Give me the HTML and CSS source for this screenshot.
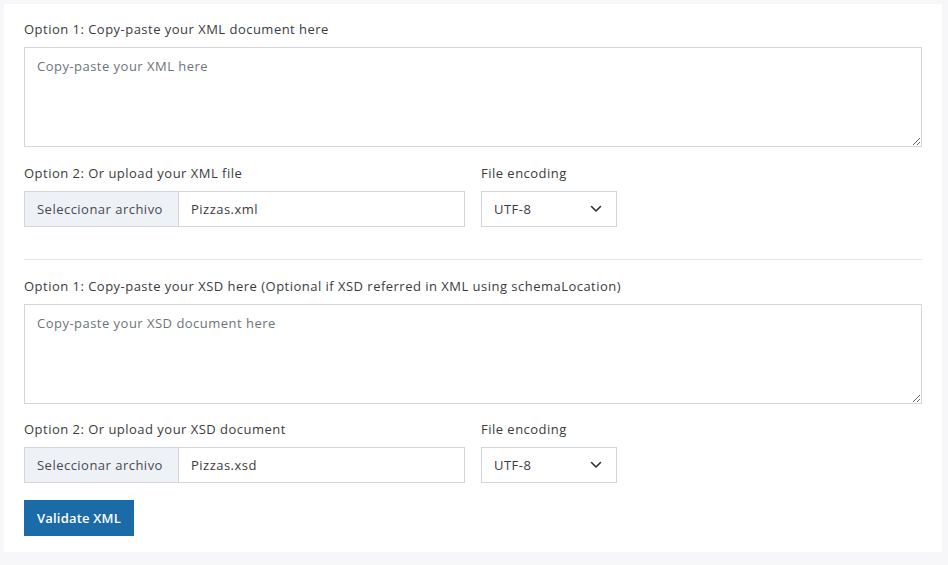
FILE: index.html
```html
<!DOCTYPE html>
<html lang="en">
<head>
<meta charset="utf-8">
<title>XML Validator</title>
<link rel="stylesheet" href="styles.css">
</head>
<body>
<main class="card">
  <form class="form">
    <section class="group">
      <label class="label" for="xml">Option 1: Copy-paste your XML document here</label>
      <textarea id="xml" class="textarea" placeholder="Copy-paste your XML here"></textarea>
      <div class="row">
        <div class="col-file">
          <div class="label">Option 2: Or upload your XML file</div>
          <div class="file">
            <span class="file-btn">Seleccionar archivo</span>
            <span class="file-name">Pizzas.xml</span>
          </div>
        </div>
        <div class="col-enc">
          <div class="label">File encoding</div>
          <select class="select"><option>UTF-8</option></select>
        </div>
      </div>
    </section>
    <hr class="divider">
    <section class="group">
      <label class="label" for="xsd">Option 1: Copy-paste your XSD here (Optional if XSD referred in XML using schemaLocation)</label>
      <textarea id="xsd" class="textarea" placeholder="Copy-paste your XSD document here"></textarea>
      <div class="row row-b">
        <div class="col-file">
          <div class="label">Option 2: Or upload your XSD document</div>
          <div class="file">
            <span class="file-btn">Seleccionar archivo</span>
            <span class="file-name">Pizzas.xsd</span>
          </div>
        </div>
        <div class="col-enc">
          <div class="label">File encoding</div>
          <select class="select"><option>UTF-8</option></select>
        </div>
      </div>
    </section>
    <button type="button" class="btn">Validate XML</button>
  </form>
</main>
</body>
</html>
```
FILE: styles.css
```css
html, body {
  margin: 0;
  padding: 0;
  background: #f7f7f9;
}
body {
  padding: 4px 6px 13px 4px;
  font-family: "Open Sans", "Liberation Sans", sans-serif;
  font-size: 13px;
  letter-spacing: 0.48px;
  color: #3a3b3d;
}
.card {
  background: #fff;
  padding: 15px 20px 16px 20px;
}
.form {
  display: flex;
  flex-direction: column;
}
.group {
  display: flex;
  flex-direction: column;
}
.label {
  display: block;
  line-height: 20px;
  height: 20px;
  margin-bottom: 8px;
  color: #3a3b3d;
  white-space: nowrap;
}
.textarea {
  display: block;
  box-sizing: border-box;
  width: 100%;
  height: 100px;
  margin: 0;
  padding: 8px 12px;
  border: 1px solid #d2d5da;
  border-radius: 0;
  font-family: inherit;
  font-size: 13px;
  letter-spacing: 0.48px;
  line-height: 20px;
  color: #3a3b3d;
  resize: vertical;
  outline: none;
}
.textarea::placeholder {
  color: #6e737b;
}
.row {
  display: flex;
  gap: 16px;
  margin-top: 16px;
}
.row-b {
  margin-top: 15px;
}
.col-file {
  width: 441px;
  display: flex;
  flex-direction: column;
}
.col-enc {
  width: 136px;
  display: flex;
  flex-direction: column;
}
.file {
  display: flex;
  box-sizing: border-box;
  height: 36px;
  border: 1px solid #d2d5da;
}
.file-btn {
  display: flex;
  align-items: center;
  padding: 0 12px;
  background: #eef1f6;
  border-right: 1px solid #d2d5da;
  color: #474a50;
  width: 129px;
  white-space: nowrap;
}
.file-name {
  display: flex;
  align-items: center;
  padding: 0 12px;
  color: #3a3b3d;
}
.select {
  box-sizing: border-box;
  height: 36px;
  width: 136px;
  margin: 0;
  padding: 0 12px;
  border: 1px solid #d2d5da;
  border-radius: 0;
  background: #fff url("data:image/svg+xml,%3Csvg xmlns='http://www.w3.org/2000/svg' width='12' height='8' viewBox='0 0 12 8'%3E%3Cpath d='M1.5 1.5 6 6l4.5-4.5' fill='none' stroke='%23333' stroke-width='1.6' stroke-linecap='round' stroke-linejoin='round'/%3E%3C/svg%3E") no-repeat right 14px center / 12px 8px;
  -webkit-appearance: none;
  appearance: none;
  font-family: inherit;
  font-size: 13px;
  letter-spacing: 0.48px;
  color: #3a3b3d;
  outline: none;
}
.divider {
  border: 0;
  border-top: 1px solid #e3e5e8;
  margin: 32px 0 16px 0;
  height: 0;
}
.btn {
  align-self: flex-start;
  margin-top: 17px;
  height: 36px;
  width: 110px;
  padding: 0;
  border: 0;
  border-radius: 0;
  background: #1b6ba8;
  color: #fff;
  font-family: inherit;
  font-size: 13px;
  font-weight: 600;
  letter-spacing: 0.2px;
  cursor: pointer;
}
```
